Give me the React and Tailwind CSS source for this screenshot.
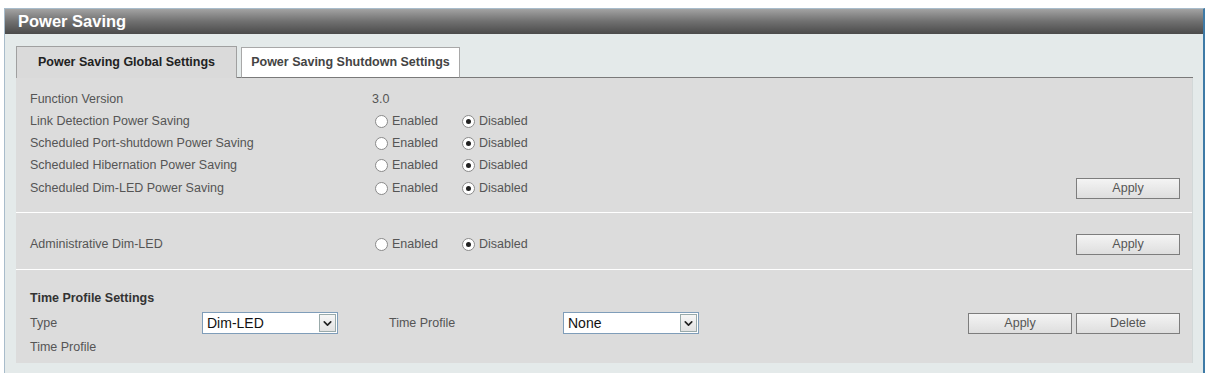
import { ChevronDown } from 'lucide-react'

const GLOBAL_ROWS = [
  { label: 'Link Detection Power Saving' },
  { label: 'Scheduled Port-shutdown Power Saving' },
  { label: 'Scheduled Hibernation Power Saving' },
]

function Radio({ checked }) {
  return (
    <span className="inline-flex w-[13px] h-[13px] rounded-full border border-[#8a8a8a] bg-white items-center justify-center">
      {checked && <span className="w-[5px] h-[5px] rounded-full bg-[#222]" />}
    </span>
  )
}

function EnableDisable() {
  return (
    <div className="flex items-center pl-[3px]">
      <Radio />
      <span className="ml-[4px] w-[70px]">Enabled</span>
      <Radio checked />
      <span className="ml-[4px]">Disabled</span>
    </div>
  )
}

function Button({ children }) {
  return (
    <button className="w-[104px] h-[21px] border border-[#7d7d7d] bg-gradient-to-b from-[#f4f4f4] to-[#dedede] text-[12.5px] text-[#555]">
      {children}
    </button>
  )
}

function Select({ value }) {
  return (
    <div className="w-[136px] h-[22px] border border-[#7f9db9] bg-white flex items-center">
      <span className="flex-1 pl-[4px] text-[14px] text-[#111]">{value}</span>
      <span className="w-[17px] h-[18px] mr-[1px] border border-[#9aa] bg-gradient-to-b from-[#f6f6f6] to-[#e2e2e2] flex items-center justify-center">
        <ChevronDown size={13} strokeWidth={3} color="#222" />
      </span>
    </div>
  )
}

export default function App() {
  return (
    <div className="w-[1209px] h-[373px] bg-white pt-[8px] px-[4px] overflow-hidden font-['Liberation_Sans',Arial,sans-serif] text-[12.5px] text-[#555]">
      <div className="h-[400px] border-l border-t border-[#a8bccb] border-r-2 border-r-[#3e7aa6]">
        {/* Title bar */}
        <div className="h-[25px] bg-gradient-to-b from-[#a3a3a3] via-[#707070] to-[#4b4b4b] flex items-center pl-[13px]">
          <span className="text-white font-bold text-[16.5px]">Power Saving</span>
        </div>

        <div className="bg-[#e4eaea] pl-[11px] pr-[10px] pt-[12px] h-[400px]">
          {/* Tabs */}
          <div className="flex items-end h-[32px]">
            <div className="w-[221px] h-[32px] bg-[#dadada] border border-b-0 border-[#a0a0a0] flex items-center justify-center font-bold text-[#222]">
              Power Saving Global Settings
            </div>
            <div className="w-[4px] border-b border-[#7a7a7a] h-full" />
            <div className="w-[219px] h-[31px] bg-white border border-[#a8a8a8] border-b-[#7a7a7a] flex items-center justify-center font-bold text-[#444]">
              Power Saving Shutdown Settings
            </div>
            <div className="flex-1 h-full border-b border-[#7a7a7a]" />
          </div>

          {/* Panel */}
          <div className="bg-[#dcdcdc] border-r border-[#d2d8d8]">
            {/* Global settings */}
            <div className="pt-[10px] pb-[12px] pl-[14px] pr-[12px]">
              <div className="flex items-center h-[22px]">
                <span className="w-[342px]">Function Version</span>
                <span>3.0</span>
              </div>
              {GLOBAL_ROWS.map((row) => (
                <div key={row.label} className="flex items-center h-[22px]">
                  <span className="w-[342px]">{row.label}</span>
                  <EnableDisable />
                </div>
              ))}
              <div className="flex items-center h-[24px]">
                <span className="w-[342px]">Scheduled Dim-LED Power Saving</span>
                <EnableDisable />
                <div className="ml-auto">
                  <Button>Apply</Button>
                </div>
              </div>
            </div>

            <div className="h-[1px] bg-white" />

            {/* Administrative Dim-LED */}
            <div className="h-[56px] pt-[20px] pl-[14px] pr-[12px]">
              <div className="flex items-center h-[22px]">
                <span className="w-[342px]">Administrative Dim-LED</span>
                <EnableDisable />
                <div className="ml-auto">
                  <Button>Apply</Button>
                </div>
              </div>
            </div>

            <div className="h-[1px] bg-white" />

            {/* Time profile settings */}
            <div className="pt-[18px] pb-[4px] pl-[14px] pr-[12px]">
              <div className="h-[20px] flex items-center font-bold text-[#333]">Time Profile Settings</div>
              <div className="flex items-center h-[24px] mt-[3px]">
                <span className="w-[172px]">Type</span>
                <Select value="Dim-LED" />
                <span className="ml-[51px] w-[174px]">Time Profile</span>
                <Select value="None" />
                <div className="ml-auto flex gap-[4px]">
                  <Button>Apply</Button>
                  <Button>Delete</Button>
                </div>
              </div>
              <div className="flex items-center h-[24px]">Time Profile</div>
            </div>
          </div>
        </div>
      </div>
    </div>
  )
}
